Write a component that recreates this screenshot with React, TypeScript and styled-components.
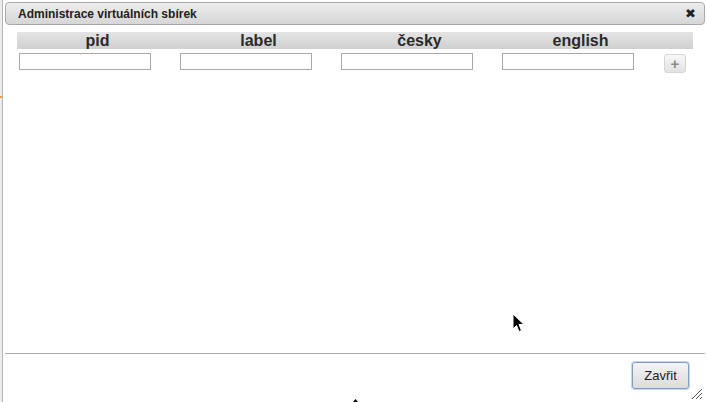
import React from "react";
import styled, { createGlobalStyle } from "styled-components";

const GlobalStyle = createGlobalStyle`
  html, body {
    margin: 0;
    padding: 0;
    background: #ffffff;
  }
  body {
    font-family: "Liberation Sans", Arial, sans-serif;
  }
`;

const Page = styled.div`
  position: relative;
  display: flex;
  width: 707px;
  height: 402px;
  overflow: hidden;
  background: #ffffff;
`;

const SideStrip = styled.div`
  position: relative;
  width: 2px;
  background: #ececec;
`;

const OrangeMark = styled.div`
  position: absolute;
  left: 0;
  top: 96px;
  width: 2px;
  height: 2px;
  background: #f0a040;
`;

const Dialog = styled.div`
  flex: 1;
  display: flex;
  flex-direction: column;
  border-left: 1px solid #b4b4b4;
  padding: 2px 2px 0 2px;
  position: relative;
`;

const TitleBar = styled.div`
  display: flex;
  align-items: center;
  justify-content: space-between;
  height: 21px;
  border: 1px solid #aaaaaa;
  border-radius: 4px;
  background: linear-gradient(#ededed, #d6d6d6);
  padding: 0 8px 0 12px;
`;

const Title = styled.span`
  font-size: 12px;
  font-weight: bold;
  color: #222222;
`;

const CloseIcon = styled.span`
  font-size: 13px;
  font-weight: bold;
  color: #222222;
  font-family: "DejaVu Sans", sans-serif;
`;

const Content = styled.div`
  flex: 1;
  padding: 7px 12px 0 12px;
`;

const Table = styled.div`
  display: grid;
  grid-template-columns: repeat(4, 161px) 32px;
`;

const HeadCell = styled.div`
  height: 17px;
  line-height: 17px;
  text-align: center;
  font-size: 16px;
  font-weight: bold;
  color: #2a2a2a;
  background: linear-gradient(#e4e4e4, #d0d0d0);
`;

const Cell = styled.div`
  padding: 4px 0 0 2px;
`;

const TextInput = styled.input`
  display: block;
  box-sizing: border-box;
  width: 132px;
  height: 17px;
  border: 1px solid #a9a9a9;
  padding: 0 2px;
  margin: 0;
  font-size: 12px;
  background: #ffffff;
`;

const AddButton = styled.button`
  display: flex;
  align-items: center;
  justify-content: center;
  box-sizing: border-box;
  width: 22px;
  height: 19px;
  margin: 1px 0 0 1px;
  padding: 0;
  border: 1px solid #d6d6d6;
  border-radius: 3px;
  background: linear-gradient(#f8f8f8, #e2e2e2);
  color: #8a8a8a;
  font-size: 15px;
  font-weight: bold;
  line-height: 15px;
  font-family: "Liberation Sans", Arial, sans-serif;
`;

const Footer = styled.div`
  height: 49px;
  border-top: 1px solid #aaaaaa;
  display: flex;
  justify-content: flex-end;
  align-items: flex-start;
  padding: 8px 16px 0 0;
  box-sizing: border-box;
  position: relative;
`;

const CloseButton = styled.button`
  box-sizing: border-box;
  width: 57px;
  height: 27px;
  border: 1px solid #7e9cc4;
  border-radius: 3px;
  background: linear-gradient(#f4f4f4, #dcdcdc);
  box-shadow: 0 0 0 1px #c8d6ea;
  color: #222222;
  font-size: 13px;
  font-family: "Liberation Sans", Arial, sans-serif;
  padding: 0;
`;

const ResizeHandle = styled.svg`
  position: absolute;
  right: 2px;
  bottom: 2px;
`;

const Cursor = styled.svg`
  position: absolute;
  left: 512px;
  top: 313px;
`;

const BottomMark = styled.svg`
  position: absolute;
  left: 353px;
  bottom: 0;
`;

const columns = ["pid", "label", "česky", "english"];

export default function App() {
  return (
    <Page>
      <GlobalStyle />
      <SideStrip>
        <OrangeMark />
      </SideStrip>
      <Dialog>
        <TitleBar>
          <Title>Administrace virtuálních sbírek</Title>
          <CloseIcon>✖</CloseIcon>
        </TitleBar>
        <Content>
          <Table>
            {columns.map((c) => (
              <HeadCell key={c}>{c}</HeadCell>
            ))}
            <HeadCell />
            {columns.map((c) => (
              <Cell key={c}>
                <TextInput type="text" />
              </Cell>
            ))}
            <Cell>
              <AddButton>+</AddButton>
            </Cell>
          </Table>
        </Content>
        <Footer>
          <CloseButton>Zavřit</CloseButton>
          <ResizeHandle width="12" height="12" viewBox="0 0 12 12">
            <path d="M11 1 L1 11 M11 5 L5 11 M11 9 L9 11" stroke="#555" strokeWidth="1" />
          </ResizeHandle>
        </Footer>
      </Dialog>
      <Cursor width="14" height="22" viewBox="0 0 14 22">
        <path
          d="M1 1 L1 16 L4.5 12.5 L7 18.5 L9.5 17.5 L7 11.5 L12 11.5 Z"
          fill="#000"
          stroke="#fff"
          strokeWidth="1"
        />
      </Cursor>
      <BottomMark width="5" height="3" viewBox="0 0 5 3">
        <path d="M2.5 0 L5 3 L0 3 Z" fill="#000" />
      </BottomMark>
    </Page>
  );
}
